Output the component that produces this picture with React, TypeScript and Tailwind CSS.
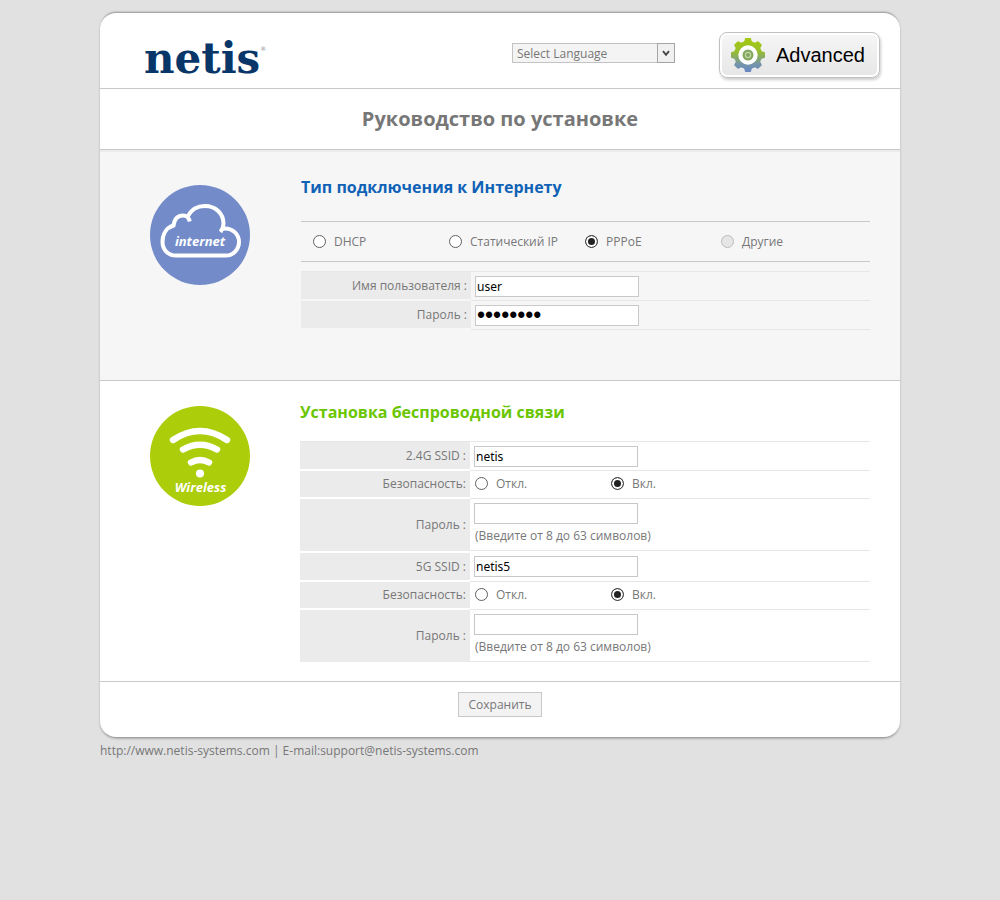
import React, { useId, useState } from "react";

const teeth = [0, 45, 90, 135, 180, 225, 270, 315];

function GearIcon() {
  return (
    <svg viewBox="0 0 36 36" className="size-9 shrink-0" aria-hidden="true">
      <defs>
        <linearGradient id="gear-fill" x1="0" y1="0" x2="0" y2="1">
          <stop offset="0" stopColor="#a6c90c" />
          <stop offset="0.4" stopColor="#98bf2c" />
          <stop offset="0.75" stopColor="#7595a8" />
          <stop offset="1" stopColor="#6585c9" />
        </linearGradient>
        <mask id="gear-shape">
          <circle cx="18" cy="18" r="14" fill="white" />
          {teeth.map((angle) => (
            <path
              key={angle}
              d="M13.8 6 L15 1.6 Q15.2 1 15.8 1 H20.2 Q20.8 1 21 1.6 L22.2 6 Z"
              fill="white"
              transform={`rotate(${angle} 18 18)`}
            />
          ))}
        </mask>
      </defs>
      <rect width="36" height="36" fill="url(#gear-fill)" mask="url(#gear-shape)" />
      <circle cx="18" cy="18" r="7.6" fill="#84a860" stroke="white" strokeWidth="4.2" />
      <circle cx="18" cy="18" r="2.6" fill="none" stroke="#c3d6a8" strokeWidth="1.2" />
    </svg>
  );
}

function InternetIcon() {
  return (
    <svg viewBox="0 0 100 100" className="size-[100px]" role="img" aria-label="internet">
      <circle cx="50" cy="50" r="50" fill="#738cc9" />
      <g fill="none" stroke="white" strokeWidth="4">
        <path d="M37.5 31.5 C41 25 47.500 21 55 21 C65.500 21 73.500 28.500 73.500 38.500 C73.500 41.500 73 43.500 70.500 47" />
        <path d="M72 44 Q73.500 43.500 75 43.500 C83 43.500 89 49.500 89 57 C89 64.500 83 70.500 76 70.500 H26 C18 70.500 12.500 64.500 12.500 57 C12.500 48.500 17 42.500 23.500 40.500 C24.500 33.500 28.500 30.500 33 30.500 C36.500 30.500 38.800 32.500 39.800 36.500" />
      </g>
      <text x="50" y="61" textAnchor="middle" fill="white" className="font-['Open_Sans','Noto_Sans',sans-serif] text-[13px] font-bold italic">
        internet
      </text>
    </svg>
  );
}

function WirelessIcon() {
  return (
    <svg viewBox="0 0 100 100" className="size-[100px]" role="img" aria-label="Wireless">
      <circle cx="50" cy="50" r="50" fill="#accd09" />
      <g fill="none" stroke="white" strokeWidth="6.4" strokeLinecap="round">
        <path d="M23 34 Q50 16 77 34" />
        <path d="M33 43.500 Q50 34 67 43.500" />
        <path d="M41 56.500 Q50 51.500 59 56.500" />
      </g>
      <circle cx="50" cy="67.500" r="4" fill="white" />
      <text x="50.500" y="86" textAnchor="middle" fill="white" className="font-['Open_Sans','Noto_Sans',sans-serif] text-[13px] font-bold italic">
        Wireless
      </text>
    </svg>
  );
}

type RadioProps = {
  name: string;
  label: string;
  checked?: boolean;
  disabled?: boolean;
  onSelect?: () => void;
};

function Radio({ name, label, checked = false, disabled = false, onSelect }: RadioProps) {
  return (
    <label className="flex w-[136px] items-center gap-2">
      <input
        type="radio"
        name={name}
        checked={checked}
        disabled={disabled}
        onChange={onSelect}
        className="size-[13px] shrink-0 appearance-none rounded-full border border-[#606060] bg-white checked:border-[#444] checked:bg-[#222] checked:shadow-[inset_0_0_0_2px_white] disabled:border-[#bcbcbc] disabled:bg-[#e6e6e6]"
      />
      <span>{label}</span>
    </label>
  );
}

type FieldRowProps = {
  label: string;
  htmlFor?: string;
  rowClass?: string;
  gapClass?: string;
  children: React.ReactNode;
};

function FieldRow({ label, htmlFor, rowClass = "h-[29px]", gapClass = "border-b-2", children }: FieldRowProps) {
  return (
    <tr className={rowClass}>
      <th
        scope="row"
        className={`w-[170px] border-transparent bg-[#ebebeb] bg-clip-padding px-1 py-0 text-right font-normal ${gapClass}`}
      >
        <label htmlFor={htmlFor}>{label}</label>
      </th>
      <td className="border-b border-[#e6e6e6] py-0 pl-1">{children}</td>
    </tr>
  );
}

function TextField({ id, type = "text", value = "" }: { id: string; type?: string; value?: string }) {
  const font =
    type === "password" ? "font-['Liberation_Sans',Arial,sans-serif] text-[23px]" : "font-['Noto_Sans',sans-serif] text-[12px]";
  return (
    <input
      id={id}
      type={type}
      defaultValue={value}
      className={`block h-[21px] w-[164px] border border-[#c8c8cc] bg-white px-px text-black outline-none ${font}`}
    />
  );
}

type WirelessRowsProps = { band: string; ssid: string; rowClass?: string; gapClass?: string };

function WirelessRows({ band, ssid, rowClass, gapClass }: WirelessRowsProps) {
  const id = useId();
  const [secure, setSecure] = useState(true);
  return (
    <>
      <FieldRow label={`${band} SSID :`} htmlFor={`${id}-ssid`} rowClass={rowClass} gapClass={gapClass}>
        <div className="pt-px">
          <TextField id={`${id}-ssid`} value={ssid} />
        </div>
      </FieldRow>
      <FieldRow label="Безопасность:" rowClass="h-7">
        <div className="flex pb-[2px] pl-px">
          <Radio name={`${id}-security`} label="Откл." checked={!secure} onSelect={() => setSecure(false)} />
          <Radio name={`${id}-security`} label="Вкл." checked={secure} onSelect={() => setSecure(true)} />
        </div>
      </FieldRow>
      <FieldRow label="Пароль :" htmlFor={`${id}-key`} rowClass="h-[52px]" gapClass="border-b-0">
        <TextField id={`${id}-key`} />
        <p className="pt-[3px] pb-[2px] pl-px leading-[18px]">(Введите от 8 до 63 символов)</p>
      </FieldRow>
    </>
  );
}

const connectionTypes = ["DHCP", "Статический IP", "PPPoE", "Другие"];

export default function App() {
  const [connection, setConnection] = useState("PPPoE");

  return (
    <div className="min-h-screen bg-[#e1e1e1] pt-[13px] font-['Open_Sans','Noto_Sans',sans-serif] text-[12px] leading-[18px] text-[#777]">
      <div className="mx-auto max-w-[800px]">
        <form
          onSubmit={(event) => event.preventDefault()}
          className="overflow-hidden rounded-2xl bg-white shadow-[0_2px_3px_-1px_rgba(0,0,0,0.45),0_-2px_2px_-1px_rgba(0,0,0,0.35)]"
        >
          <header className="flex items-start border-b border-[#c9c9c9] pr-5 pb-1 pl-11">
            <div className="flex grow pt-[21px] font-['DejaVu_Serif',serif] text-[#083668]">
              <span className="text-[42px] leading-[50px] font-bold">netis</span>
              <span className="pt-3 text-[6px] leading-none text-[#888]">®</span>
            </div>
            <div className="relative mt-[30px] mr-11">
              <select
                aria-label="Select Language"
                className="block h-5 w-[163px] appearance-none border border-[#c3c3c3] bg-[#f4f4f4] pt-px pr-5 pl-1 text-[12px] leading-[18px] text-[#777] outline-none"
              >
                <option>Select Language</option>
                <option>English</option>
                <option>Русский</option>
              </select>
              <span className="pointer-events-none absolute inset-y-0 right-0 flex w-[18px] items-center justify-center border border-[#a5a5a5] bg-[#f0f0f0]">
                <svg viewBox="0 0 8 8" className="size-2" aria-hidden="true">
                  <path d="M1 2.200 L4 5.800 L7 2.200" fill="none" stroke="#444" strokeWidth="1.900" />
                </svg>
              </span>
            </div>
            <button
              type="button"
              className="mt-[19px] flex h-[46px] w-[161px] items-center gap-[10px] rounded-lg border border-[#c0c0c0] bg-linear-to-b from-[#f6f6f6] to-[#e6e6e6] pl-[10px] font-['Liberation_Sans',Arial,sans-serif] text-[20px] text-black shadow-[inset_0_0_0_2px_white,1px_2px_3px_rgba(0,0,0,0.2)]"
            >
              <GearIcon />
              Advanced
            </button>
          </header>

          <h1 className="border-b border-[#c9c9c9] py-4 text-center text-[20px] leading-7 font-bold">
            Руководство по установке
          </h1>

          <section className="flex border-b border-[#c9c9c9] bg-[#f6f6f7] pt-[22px] pr-[30px] pb-[50px] pl-[50px] shadow-[inset_0_2px_0_#ececec]">
            <div className="w-[151px] shrink-0 pt-[13px]">
              <InternetIcon />
            </div>
            <div className="grow">
              <h2 className="pt-1 pb-[22px] text-[16px] leading-[23px] font-bold text-[#0f62b5]">
                Тип подключения к Интернету
              </h2>
              <div className="mb-[9px] flex border-y border-[#c9c9c9] py-[10px] pl-3 leading-[19px]">
                {connectionTypes.map((type) => (
                  <Radio
                    key={type}
                    name="connection"
                    label={type}
                    checked={connection === type}
                    disabled={type === "Другие"}
                    onSelect={() => setConnection(type)}
                  />
                ))}
              </div>
              <table className="w-full border-separate border-spacing-0 border-t border-[#e8e8ea]">
                <tbody>
                  <FieldRow label="Имя пользователя :" htmlFor="user">
                    <div className="pt-px">
                      <TextField id="user" value="user" />
                    </div>
                  </FieldRow>
                  <FieldRow label="Пароль :" htmlFor="password">
                    <div className="pt-px">
                      <TextField id="password" type="password" value="password" />
                    </div>
                  </FieldRow>
                </tbody>
              </table>
            </div>
          </section>

          <section className="flex border-b border-[#c9c9c9] pt-5 pr-[30px] pb-[19px] pl-[50px]">
            <div className="w-[150px] shrink-0 pt-[5px]">
              <WirelessIcon />
            </div>
            <div className="grow">
              <h2 className="pb-[17px] text-[16px] leading-[23px] font-bold text-[#6ac600]">
                Установка беспроводной связи
              </h2>
              <table className="w-full border-separate border-spacing-0 border-t border-[#e6e6e6]">
                <tbody>
                  <WirelessRows band="2.4G" ssid="netis" />
                  <WirelessRows band="5G" ssid="netis5" rowClass="h-[31px]" gapClass="border-y-2" />
                </tbody>
              </table>
            </div>
          </section>

          <div className="flex justify-center pt-[10px] pb-5">
            <button type="submit" className="h-[25px] border border-[#c8c8cc] bg-[#f3f3f4] px-[9px]">
              Сохранить
            </button>
          </div>
        </form>

        <footer className="pt-[5px]">
          <a href="http://www.netis-systems.com">http://www.netis-systems.com</a> |{" "}
          <a href="mailto:support@netis-systems.com">E-mail:support@netis-systems.com</a>
        </footer>
      </div>
    </div>
  );
}
